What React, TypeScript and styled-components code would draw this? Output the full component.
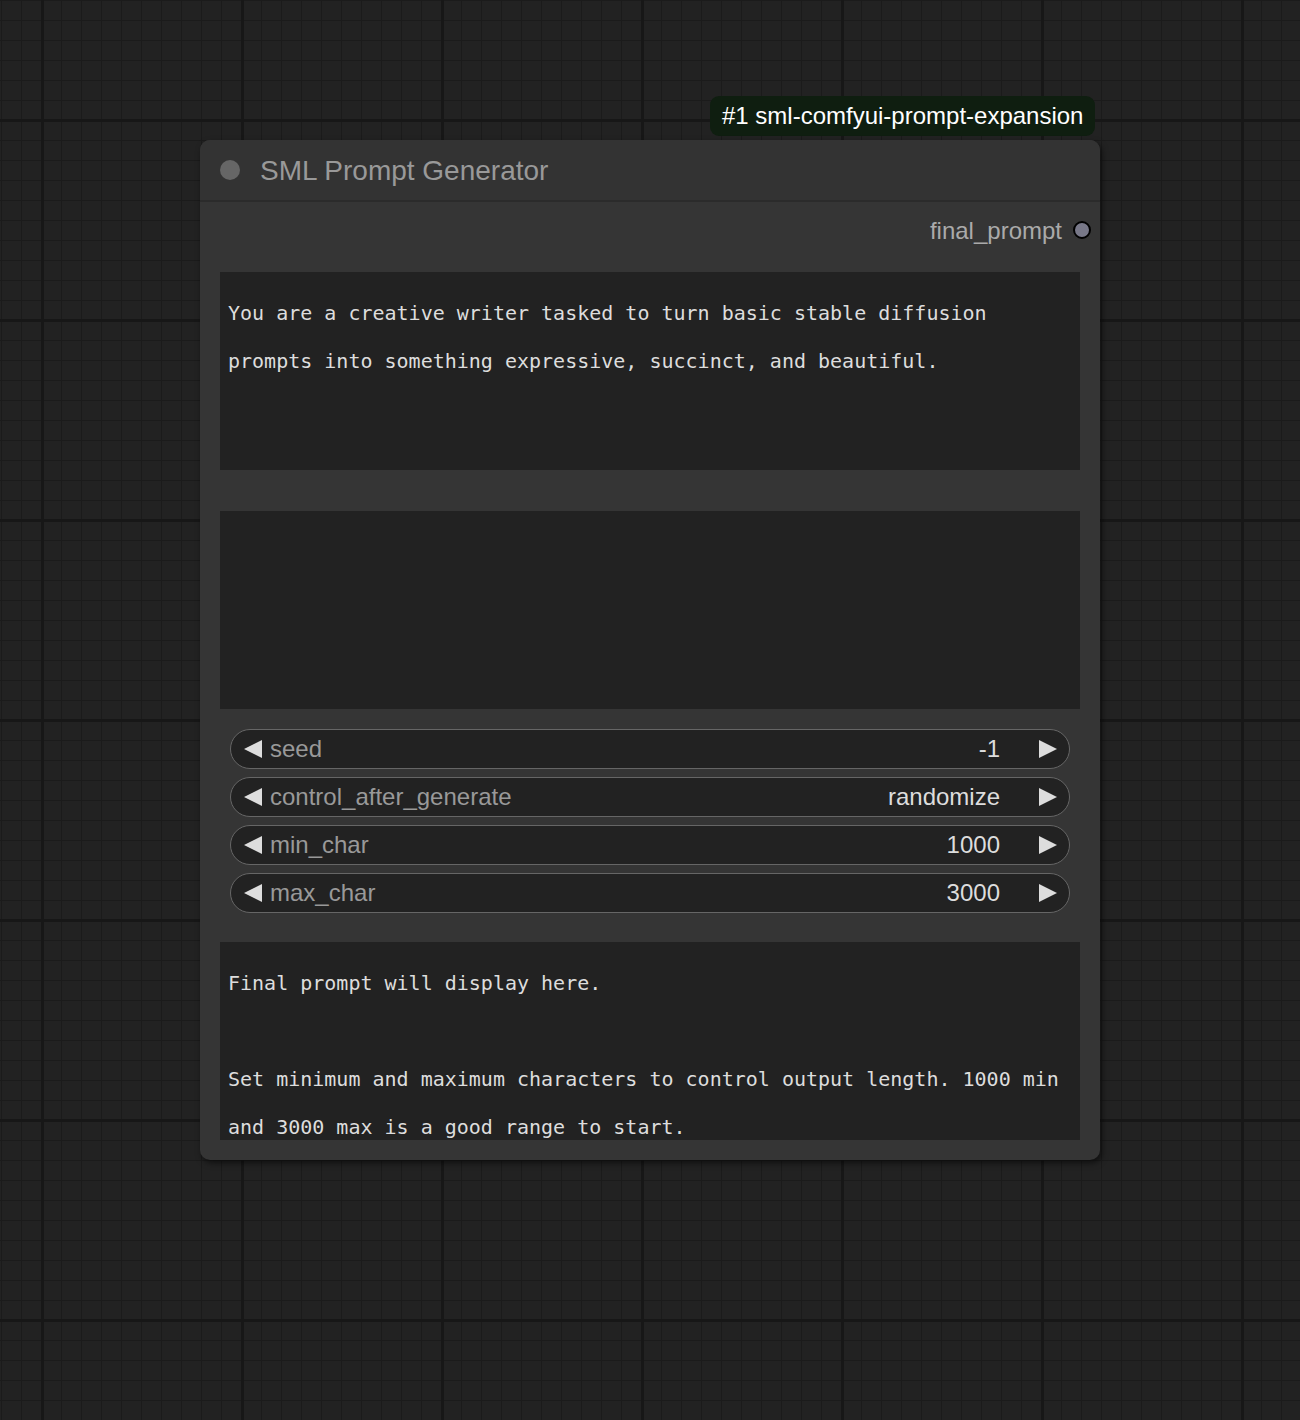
import React from 'react';
import styled, { createGlobalStyle } from 'styled-components';

const GlobalStyle = createGlobalStyle`
    html, body {
        margin: 0;
        padding: 0;
        background: #222222;
    }
    body {
        font-family: "Liberation Sans", Arial, sans-serif;
    }
`;

const Canvas = styled.div`
    position: relative;
    width: 1300px;
    height: 1420px;
    overflow: hidden;
    background-color: #222222;
    background-image:
        linear-gradient(to right, #171717 0 3px, transparent 3px),
        linear-gradient(to bottom, #171717 0 3px, transparent 3px),
        linear-gradient(to right, #1b1b1b 0 1px, transparent 1px),
        linear-gradient(to bottom, #1b1b1b 0 1px, transparent 1px);
    background-size: 200px 200px, 200px 200px, 20px 20px, 20px 20px;
    background-position: 41px 0, 0 119px, 1px 0, 0 0;
`;

const Badge = styled.div`
    position: absolute;
    left: 710px;
    top: 96px;
    height: 40px;
    padding: 0 12px;
    display: flex;
    align-items: center;
    background: #0f1e10;
    border-radius: 9px;
    color: #ffffff;
    font-size: 24px;
    white-space: nowrap;
`;

const Node = styled.div`
    position: absolute;
    left: 200px;
    top: 140px;
    width: 900px;
    display: flex;
    flex-direction: column;
    background: #353535;
    border-radius: 10px;
    box-shadow: 2px 3px 6px rgba(0, 0, 0, 0.55);
    overflow: hidden;
`;

const TitleBar = styled.div`
    height: 60px;
    display: flex;
    align-items: center;
    gap: 20px;
    padding: 0 20px;
    background: #333333;
    border-bottom: 2px solid #2b2b2b;
`;

const TitleDot = styled.span`
    width: 20px;
    height: 20px;
    border-radius: 50%;
    background: #666666;
`;

const Title = styled.span`
    color: #999999;
    font-size: 28px;
    margin-top: 1px;
`;

const OutputRow = styled.div`
    height: 58px;
    display: flex;
    align-items: center;
    justify-content: flex-end;
    gap: 11px;
    padding: 0 9px 0 0;
    color: #aaaaaa;
    font-size: 24px;
`;

const Slot = styled.span`
    width: 14px;
    height: 14px;
    margin-top: -2px;
    border-radius: 50%;
    background: #787888;
    border: 2px solid #000000;
`;

const TextBox = styled.div<{ $top: number }>`
    margin: ${(p) => p.$top}px 20px 0;
    height: 198px;
    box-sizing: border-box;
    padding: 17px 8px 0;
    background: #222222;
    color: #dddddd;
    font-family: "DejaVu Sans Mono", "Liberation Mono", monospace;
    font-size: 20px;
    line-height: 48px;
    white-space: pre-wrap;
    word-wrap: break-word;
    overflow: hidden;

    &:last-child {
        margin-bottom: 20px;
    }
`;

const WidgetList = styled.div`
    margin: 20px 30px 0;
    display: flex;
    flex-direction: column;
    gap: 8px;
`;

const Widget = styled.div`
    height: 40px;
    box-sizing: border-box;
    display: flex;
    align-items: center;
    padding: 0 11px 0 12px;
    background: #222222;
    border: 1.5px solid #666666;
    border-radius: 20px;
    font-size: 24px;
`;

const Label = styled.span`
    flex: 1;
    margin-left: 7px;
    color: #999999;
`;

const Value = styled.span`
    color: #dddddd;
    margin-right: 38px;
`;

const Arrow = ({ dir }: { dir: 'left' | 'right' }) => (
    <svg width="20" height="20" viewBox="0 0 20 20">
        {dir === 'left' ? (
            <polygon points="19,1 19,19 1,10" fill="#dddddd" />
        ) : (
            <polygon points="1,1 1,19 19,10" fill="#dddddd" />
        )}
    </svg>
);

const widgets = [
    { name: 'seed', value: '-1' },
    { name: 'control_after_generate', value: 'randomize' },
    { name: 'min_char', value: '1000' },
    { name: 'max_char', value: '3000' },
];

export default function App() {
    return (
        <>
            <GlobalStyle />
            <Canvas>
                <Badge>#1 sml-comfyui-prompt-expansion</Badge>
                <Node>
                    <TitleBar>
                        <TitleDot />
                        <Title>SML Prompt Generator</Title>
                    </TitleBar>
                    <OutputRow>
                        final_prompt
                        <Slot />
                    </OutputRow>
                    <TextBox $top={12}>
                        You are a creative writer tasked to turn basic stable diffusion prompts into something expressive, succinct, and beautiful.
                    </TextBox>
                    <TextBox $top={41} />
                    <WidgetList>
                        {widgets.map((w) => (
                            <Widget key={w.name}>
                                <Arrow dir="left" />
                                <Label>{w.name}</Label>
                                <Value>{w.value}</Value>
                                <Arrow dir="right" />
                            </Widget>
                        ))}
                    </WidgetList>
                    <TextBox $top={29}>
                        {'Final prompt will display here.\n\nSet minimum and maximum characters to control output length. 1000 min and 3000 max is a good range to start.'}
                    </TextBox>
                </Node>
            </Canvas>
        </>
    );
}
